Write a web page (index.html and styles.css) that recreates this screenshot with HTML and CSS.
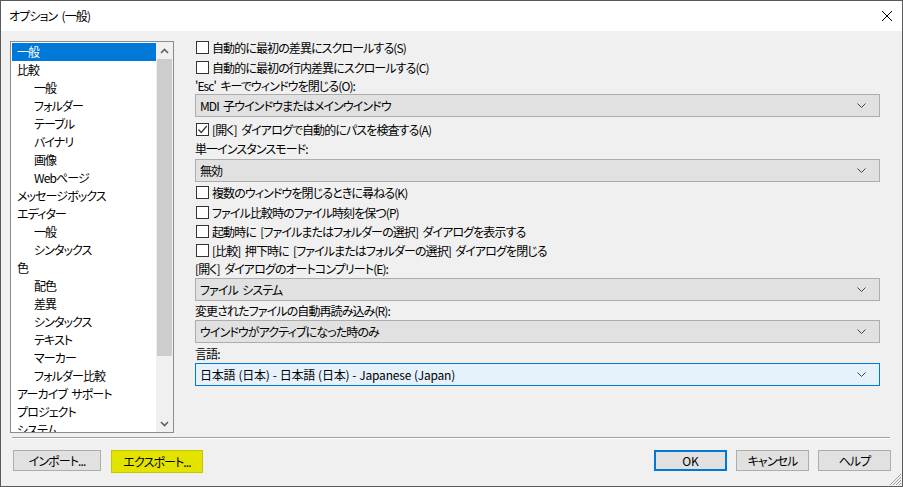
FILE: index.html
```html
<!DOCTYPE html>
<html lang="ja">
<head>
<meta charset="utf-8">
<title>オプション (一般)</title>
<link rel="stylesheet" href="styles.css">
</head>
<body>
<div class="window">
  <div class="titlebar">
    <span class="title">オプション (一般)</span>
    <svg class="close" width="12" height="12" viewBox="0 0 12 12"><path d="M1 1 L11 11 M11 1 L1 11" stroke="#000" stroke-width="1" fill="none"/></svg>
  </div>
  <div class="main">
    <div class="tree">
      <ul class="tree-list">
        <li class="item selected">一般</li>
        <li class="item">比較</li>
        <li class="item child">一般</li>
        <li class="item child">フォルダー</li>
        <li class="item child">テーブル</li>
        <li class="item child">バイナリ</li>
        <li class="item child">画像</li>
        <li class="item child">Webページ</li>
        <li class="item">メッセージボックス</li>
        <li class="item">エディター</li>
        <li class="item child">一般</li>
        <li class="item child">シンタックス</li>
        <li class="item">色</li>
        <li class="item child">配色</li>
        <li class="item child">差異</li>
        <li class="item child">シンタックス</li>
        <li class="item child">テキスト</li>
        <li class="item child">マーカー</li>
        <li class="item child">フォルダー比較</li>
        <li class="item">アーカイブ サポート</li>
        <li class="item">プロジェクト</li>
        <li class="item">システム</li>
      </ul>
      <div class="vscroll">
        <div class="sb-btn"><svg width="9" height="6" viewBox="0 0 9 6"><path d="M1 5 L4.5 1.5 L8 5" stroke="#606060" stroke-width="1.6" fill="none"/></svg></div>
        <div class="sb-track"><div class="sb-thumb"></div></div>
        <div class="sb-btn"><svg width="9" height="6" viewBox="0 0 9 6"><path d="M1 1 L4.5 4.5 L8 1" stroke="#606060" stroke-width="1.6" fill="none"/></svg></div>
      </div>
    </div>
    <div class="panel">
      <div class="cb-row"><span class="box"></span><span>自動的に最初の差異にスクロールする(S)</span></div>
      <div class="cb-row"><span class="box"></span><span>自動的に最初の行内差異にスクロールする(C)</span></div>
      <div class="lbl lbl-esc">'Esc' キーでウィンドウを閉じる(O):</div>
      <div class="dd"><span>MDI 子ウインドウまたはメインウインドウ</span><svg class="chev" width="9" height="5" viewBox="0 0 9 5"><path d="M0.5 0.5 L4.5 4.5 L8.5 0.5" stroke="#444" stroke-width="1" fill="none"/></svg></div>
      <div class="cb-row cb-after-dd"><span class="box"><svg width="11" height="11" viewBox="0 0 11 11"><path d="M1.5 5.5 L4.2 8.5 L9.8 2" stroke="#333" stroke-width="1.2" fill="none"/></svg></span><span>[開く] ダイアログで自動的にパスを検査する(A)</span></div>
      <div class="lbl lbl-single">単一インスタンスモード:</div>
      <div class="dd dd-single"><span>無効</span><svg class="chev" width="9" height="5" viewBox="0 0 9 5"><path d="M0.5 0.5 L4.5 4.5 L8.5 0.5" stroke="#444" stroke-width="1" fill="none"/></svg></div>
      <div class="cb-row"><span class="box"></span><span>複数のウィンドウを閉じるときに尋ねる(K)</span></div>
      <div class="cb-row"><span class="box"></span><span>ファイル比較時のファイル時刻を保つ(P)</span></div>
      <div class="cb-row cb-short"><span class="box"></span><span>起動時に [ファイルまたはフォルダーの選択] ダイアログを表示する</span></div>
      <div class="cb-row cb-short"><span class="box"></span><span>[比較] 押下時に [ファイルまたはフォルダーの選択] ダイアログを閉じる</span></div>
      <div class="lbl lbl-auto">[開く] ダイアログのオートコンプリート(E):</div>
      <div class="dd dd-auto"><span>ファイル システム</span><svg class="chev" width="9" height="5" viewBox="0 0 9 5"><path d="M0.5 0.5 L4.5 4.5 L8.5 0.5" stroke="#444" stroke-width="1" fill="none"/></svg></div>
      <div class="lbl lbl-reload">変更されたファイルの自動再読み込み(R):</div>
      <div class="dd"><span>ウインドウがアクティブになった時のみ</span><svg class="chev" width="9" height="5" viewBox="0 0 9 5"><path d="M0.5 0.5 L4.5 4.5 L8.5 0.5" stroke="#444" stroke-width="1" fill="none"/></svg></div>
      <div class="lbl lbl-lang">言語:</div>
      <div class="dd dd-focus"><span class="latin">日本語 (日本) - 日本語 (日本) - Japanese (Japan)</span><svg class="chev" width="9" height="5" viewBox="0 0 9 5"><path d="M0.5 0.5 L4.5 4.5 L8.5 0.5" stroke="#444" stroke-width="1" fill="none"/></svg></div>
    </div>
  </div>
  <div class="sep"></div>
  <div class="buttons">
    <button class="btn btn-import">インポート...</button>
    <button class="btn btn-export">エクスポート...</button>
    <div class="spacer"></div>
    <button class="btn btn-ok">OK</button>
    <button class="btn">キャンセル</button>
    <button class="btn">ヘルプ</button>
  </div>
  <svg class="grip" width="14" height="14" viewBox="0 0 14 14"><path d="M13 2 L2 13 M13 5 L5 13 M13 8 L8 13 M13 11 L11 13" stroke="#a0a0a0" stroke-width="1" fill="none"/></svg>
</div>
</body>
</html>
```

FILE: styles.css
```css
* { box-sizing: border-box; }
html, body { margin: 0; padding: 0; }
body {
  font-family: "Noto Sans CJK JP", "Noto Sans", sans-serif;
  font-size: 12px;
  font-feature-settings: "palt";
  letter-spacing: -0.9px;
  word-spacing: 2.5px;
  color: #000;
  background: #f0f0f0;
}
.window {
  position: relative;
  width: 903px;
  height: 487px;
  border: 1px solid #5a5a5a;
  background: #f0f0f0;
  display: flex;
  flex-direction: column;
  overflow: hidden;
}
.titlebar {
  height: 30px;
  background: #fff;
  display: flex;
  align-items: center;
  padding-left: 8px;
  padding-right: 9px;
  justify-content: space-between;
  flex: none;
}
.title { font-size: 12px; line-height: 16px; }
.close { display: block; }

.main {
  display: flex;
  align-items: flex-start;
  margin-top: 6px;
  padding-left: 9px;
  flex: none;
}
.tree {
  margin-top: 4px;
  width: 164px;
  height: 392px;
  border: 1px solid #8c8c8c;
  background: #fff;
  display: flex;
  flex: none;
}
.tree-list {
  list-style: none;
  margin: 0;
  padding: 1px 0 0 1px;
  width: 145px;
  height: 100%;
  overflow: hidden;
}
.item {
  height: 18px;
  line-height: 18px;
  padding-left: 5px;
  white-space: nowrap;
}
.item.child { padding-left: 22px; }
.item.selected { background: #0078d7; color: #fff; }

.vscroll {
  width: 17px;
  height: 100%;
  background: #f0f0f0;
  display: flex;
  flex-direction: column;
}
.sb-btn {
  height: 17px;
  display: flex;
  align-items: center;
  justify-content: center;
  flex: none;
}
.sb-track { flex: 1; }
.sb-thumb { margin: 0 1px; height: 297px; background: #cdcdcd; }

.panel {
  margin-left: 21px;
  width: 685px;
  display: flex;
  flex-direction: column;
}
.cb-row {
  height: 20px;
  display: flex;
  align-items: center;
  white-space: nowrap;
}
.cb-row.cb-short { height: 19px; }
.cb-after-dd { margin-top: 2px; }
.box {
  width: 13px;
  height: 13px;
  margin-left: 1px;
  margin-right: 3px;
  border: 1px solid #333;
  background: #fff;
  flex: none;
  display: flex;
  align-items: center;
  justify-content: center;
}
.box svg { display: block; }
.lbl {
  display: flex;
  align-items: center;
  white-space: nowrap;
  height: 17px;
}
.lbl-single { height: 18px; }
.lbl-reload { height: 19px; }
.lbl-lang { height: 20px; align-items: flex-start; padding-top: 2px; }
.dd {
  height: 23px;
  border: 1px solid #adadad;
  background: #e1e1e1;
  display: flex;
  align-items: center;
  justify-content: space-between;
  padding: 0 13px 0 4px;
  white-space: nowrap;
}
.dd-single { margin-top: 2px; }
.dd-auto { margin-top: 1px; }
.dd-focus { border-color: #0078d7; background: #e5f1fb; }
.latin { letter-spacing: -0.2px; word-spacing: 0.5px; }
.chev { display: block; }

.sep {
  margin-top: 4px;
  margin-left: 11px;
  width: 878px;
  height: 2px;
  border-top: 1px solid #a0a0a0;
  border-bottom: 1px solid #fff;
  flex: none;
}
.buttons {
  margin-top: 11px;
  padding-left: 12px;
  padding-right: 11px;
  display: flex;
  gap: 9px;
  flex: none;
}
.spacer { flex: 1; }
.btn {
  font-family: inherit;
  font-size: 12px;
  font-feature-settings: "palt";
  letter-spacing: -0.9px;
  color: #000;
  height: 21px;
  width: 73px;
  border: 1px solid #adadad;
  background: #e1e1e1;
  padding: 0;
  margin: 0;
  line-height: 19px;
}
.btn-import { width: 88px; }
.btn-export {
  width: 92px;
  height: 23px;
  margin-left: 1px;
  background: #e3e300;
  border: 1px solid #c6c600;
}
.btn-ok { border: 2px solid #0078d7; line-height: 17px; letter-spacing: 0; }
.grip {
  position: absolute;
  right: 0;
  bottom: 0;
}
```
